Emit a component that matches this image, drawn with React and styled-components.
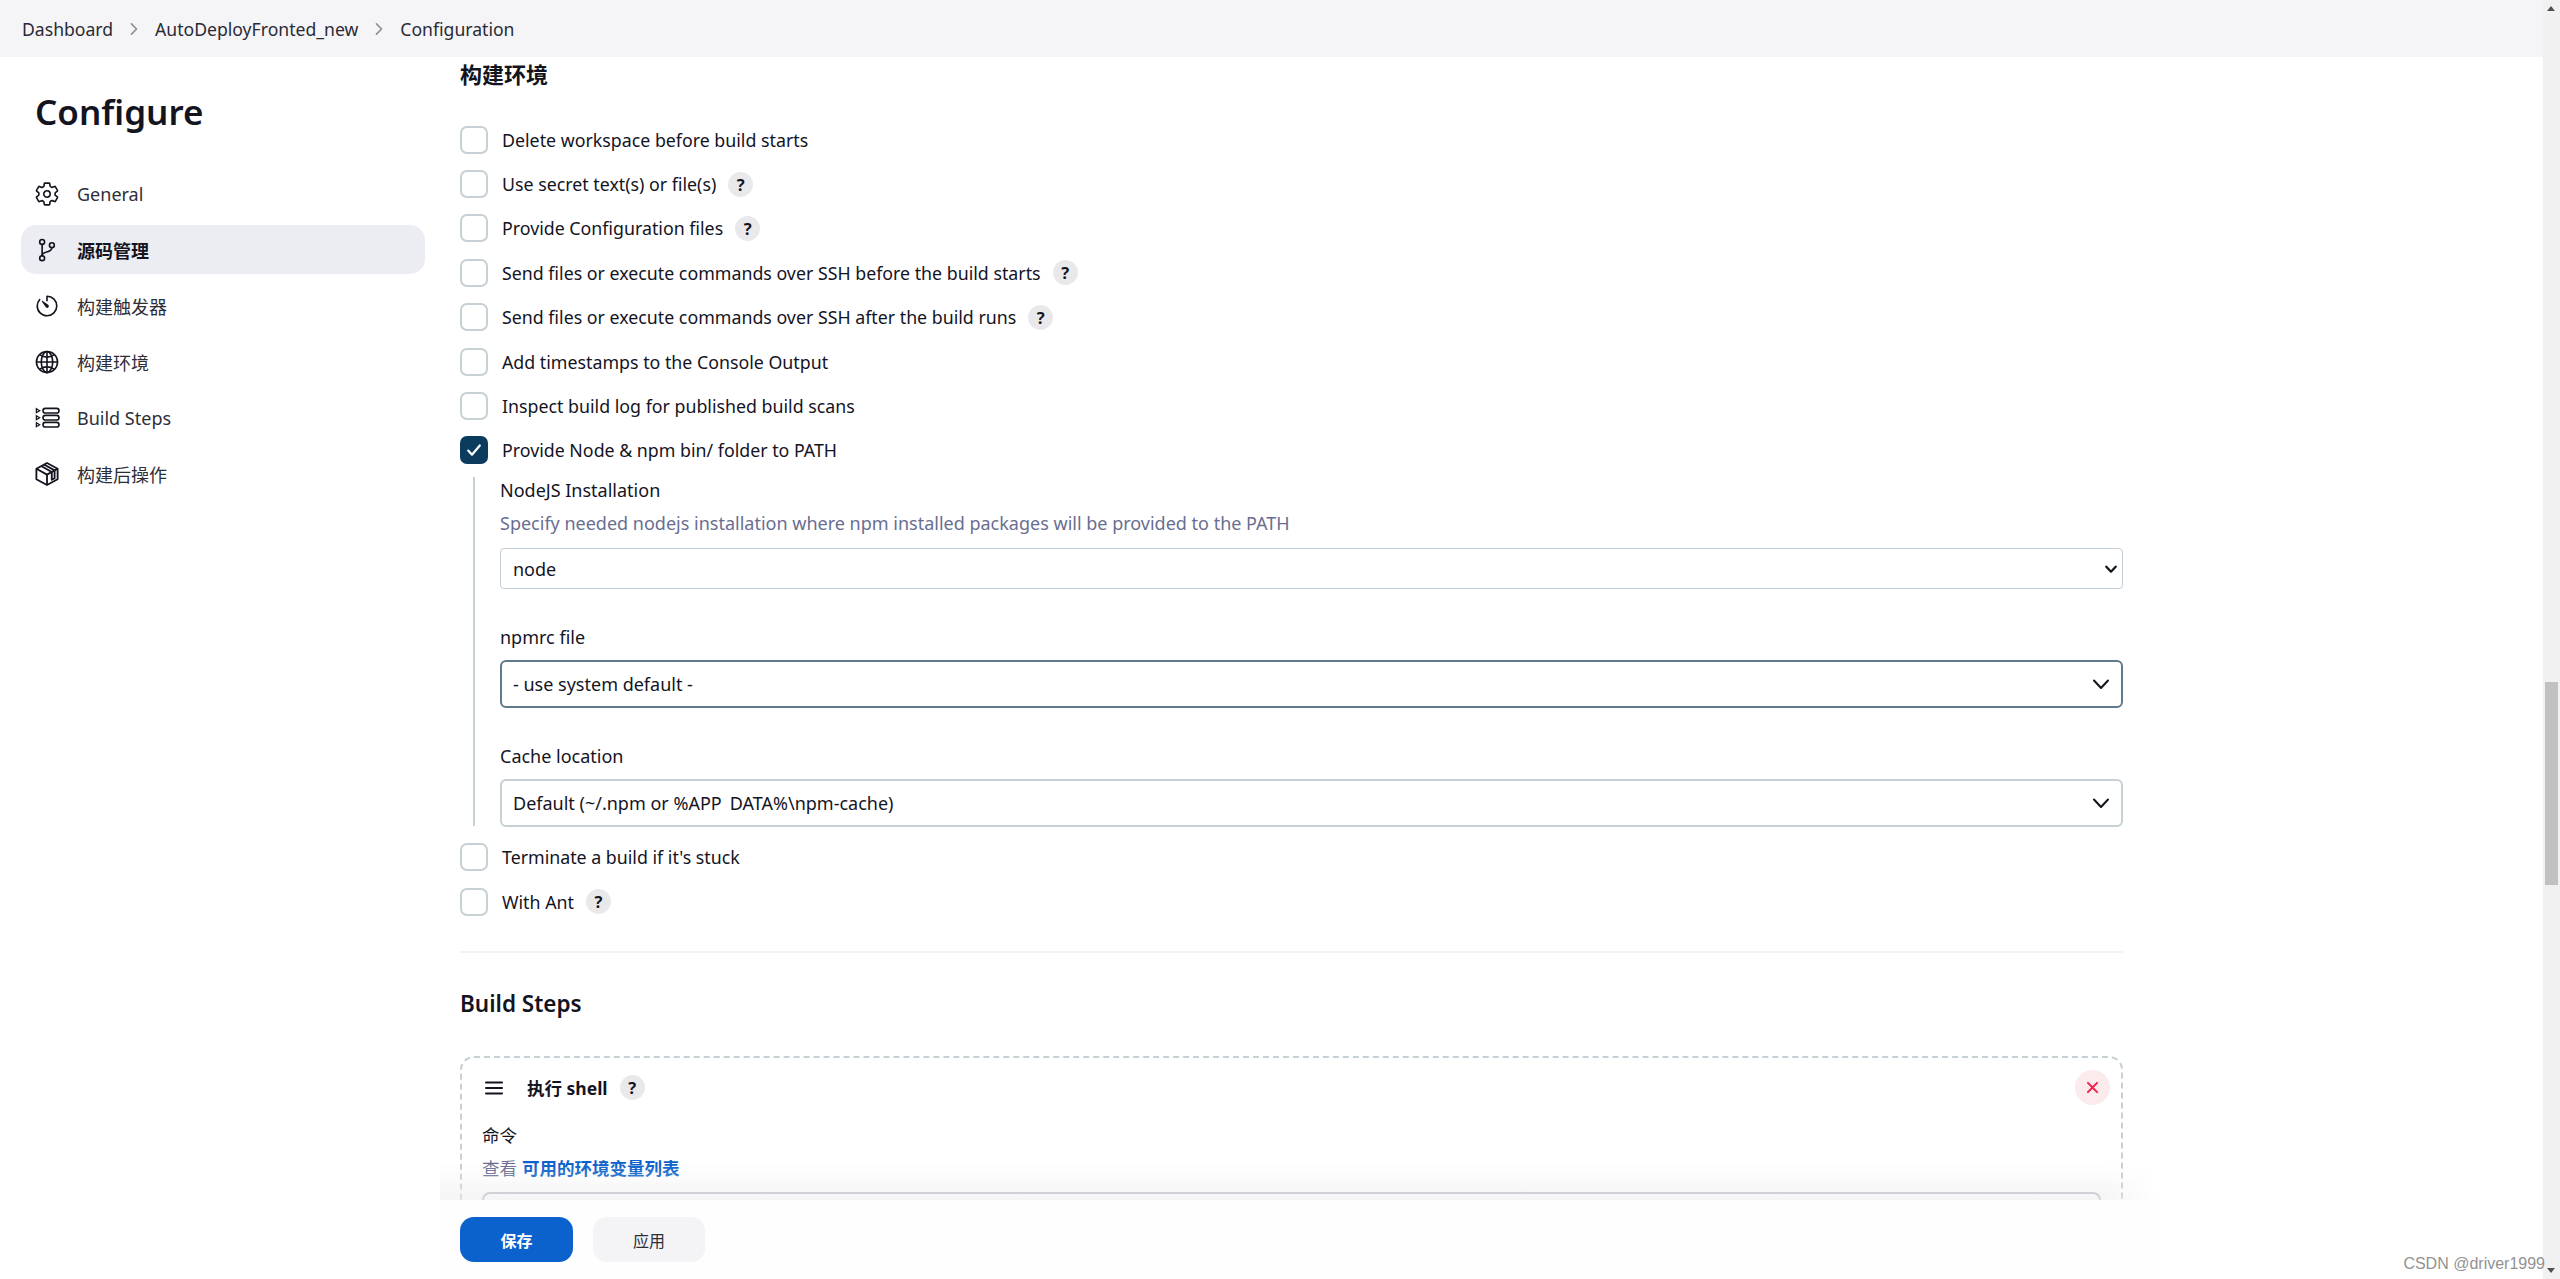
import React from 'react';
import styled, { createGlobalStyle } from 'styled-components';
import {
  IoSettingsOutline,
  IoGitBranchOutline,
  IoTimerOutline,
  IoGlobeOutline,
  IoChevronForward,
  IoClose,
} from 'react-icons/io5';

const GlobalStyle = createGlobalStyle`
  html, body {
    margin: 0;
    padding: 0;
    background: #fff;
    overflow: hidden;
  }
  * {
    box-sizing: border-box;
  }
  body {
    font-family: "Noto Sans", "Noto Sans CJK SC", sans-serif;
    font-size: 18px;
    color: #14141f;
  }
`;

const Root = styled.div`
  position: relative;
  display: flex;
  width: 2560px;
  height: 1279px;
  overflow: hidden;
`;
const Page = styled.div`
  flex: 1;
  display: flex;
  flex-direction: column;
  min-width: 0;
`;
const Breadcrumbs = styled.div`
  height: 57px;
  flex: none;
  display: flex;
  align-items: center;
  padding-left: 22px;
  background: #f5f5f7;
  font-size: 17.6px;
  color: #2a2a36;
`;
const CrumbSep = styled.span`
  display: flex;
  width: ${(p) => p.$w}px;
  justify-content: center;
  color: #8f8f99;
  font-size: 18px;
`;
const Body = styled.div`
  flex: 1;
  display: flex;
  min-height: 0;
`;
const Sidebar = styled.nav`
  width: 440px;
  flex: none;
  padding: 0 15px 0 21px;
`;
const Title = styled.h1`
  margin: 32px 0 34px 14px;
  font-size: 35px;
  line-height: 46px;
  font-weight: 600;
`;
const NavItem = styled.div`
  display: flex;
  align-items: center;
  height: 49px;
  margin-bottom: 7px;
  padding-left: 13px;
  gap: 17px;
  border-radius: 15px;
  background: ${(p) => (p.$active ? '#ecedf2' : 'transparent')};
  font-weight: ${(p) => (p.$active ? 700 : 400)};
  color: ${(p) => (p.$active ? '#14141f' : '#2e2e38')};
  svg {
    width: 26px;
    height: 26px;
    flex: none;
    color: #14141f;
  }
`;
const Main = styled.main`
  width: 1717px;
  flex: none;
  display: flex;
  flex-direction: column;
  min-height: 0;
`;
const Scroll = styled.div`
  flex: 1;
  min-height: 0;
  overflow: hidden;
  padding: 0 34px 0 20px;
`;
const SectionTitle = styled.h2`
  margin: ${(p) => p.$top || 0}px 0 0;
  font-size: ${(p) => p.$size || 22}px;
  line-height: 34px;
  font-weight: 600;
`;
const Options = styled.div`
  margin-top: ${(p) => p.$top}px;
`;
const OptionRow = styled.div`
  display: flex;
  align-items: center;
  height: 44.4px;
  font-size: 17.8px;
`;
const Box = styled.span`
  display: flex;
  align-items: center;
  justify-content: center;
  width: 28px;
  height: 28px;
  margin-right: 14px;
  flex: none;
  border-radius: 7px;
  border: 2px solid ${(p) => (p.$checked ? '#0b3c5d' : '#c6d0d5')};
  background: ${(p) => (p.$checked ? '#0b3c5d' : '#fff')};
  color: #fff;
  svg {
    width: 18px;
    height: 18px;
  }
`;
const Help = styled.span`
  display: flex;
  align-items: center;
  justify-content: center;
  width: 25px;
  height: 25px;
  margin-left: 12px;
  flex: none;
  border-radius: 50%;
  background: #e9e9ec;
  color: #14141f;
  font-size: 16.5px;
  font-weight: 700;
`;
const Nested = styled.div`
  margin: 4.5px 0 0 13px;
  padding-left: 25px;
  border-left: 2px solid #c6d0d5;
  height: 349px;
`;
const FieldLabel = styled.div`
  line-height: 26px;
  margin-top: ${(p) => p.$top || 0}px;
  font-size: ${(p) => p.$size || 18}px;
`;
const Description = styled.div`
  line-height: 26px;
  margin-top: 7px;
  color: #696e91;
`;
const Select = styled.div`
  display: flex;
  align-items: center;
  justify-content: space-between;
  height: ${(p) => (p.$native ? 41 : 48)}px;
  margin-top: ${(p) => (p.$native ? 12 : 10)}px;
  padding: 0 ${(p) => (p.$native ? 5 : 11)}px 0 ${(p) => (p.$native ? 12 : 11)}px;
  background: #fff;
  border-radius: ${(p) => (p.$native ? 4 : 6)}px;
  border: ${(p) => (p.$focus ? '2px solid #5f7a8a' : p.$native ? '1px solid #c3ced6' : '2px solid #c6d0d5')};
  svg {
    color: #14141f;
    width: ${(p) => (p.$native ? 12 : 18)}px;
    height: ${(p) => (p.$native ? 12 : 18)}px;
  }
`;
const ClippedChar = styled.span`
  color: transparent;
`;
const Divider = styled.hr`
  margin: 27.5px 0 0;
  border: 0;
  height: 2px;
  background: #f2f3f6;
`;
const StepCard = styled.div`
  margin-top: 35px;
  height: 300px;
  padding: 12px 20px 0;
  border: 2px dashed #c6d0d5;
  border-radius: 14px;
`;
const StepHead = styled.div`
  display: flex;
  align-items: center;
  height: 35px;
`;
const Handle = styled.span`
  display: flex;
  width: 45px;
  flex: none;
  svg {
    width: 24px;
    height: 24px;
    color: #14141f;
  }
`;
const StepName = styled.span`
  font-size: 17.5px;
  font-weight: 700;
`;
const DeleteButton = styled.span`
  display: flex;
  align-items: center;
  justify-content: center;
  width: 35px;
  height: 35px;
  margin: 0 -9px 0 auto;
  border-radius: 50%;
  background: #fcebed;
  color: #f0244c;
  font-size: 21px;
`;
const StepHelp = styled.div`
  line-height: 26px;
  margin-top: 7px;
  font-size: 17.5px;
  color: #696e91;
`;
const StepLink = styled.a`
  color: #0b62cc;
  font-weight: 700;
  margin-left: 5px;
`;
const TextArea = styled.div`
  height: 120px;
  margin-top: 11px;
  border: 2px solid #b6bdc3;
  border-radius: 8px;
`;
const SaveBar = styled.div`
  position: relative;
  flex: none;
  display: flex;
  gap: 20px;
  height: 79px;
  padding: 17px 0 0 20px;
  background: #fefefe;
  &::before {
    content: '';
    position: absolute;
    left: 0;
    right: 0;
    bottom: 100%;
    height: 36px;
    background: linear-gradient(to top, rgba(236, 236, 238, 0.55), rgba(255, 255, 255, 0));
    mask-image: linear-gradient(to right, #000 97%, transparent);
    pointer-events: none;
  }
`;
const Button = styled.button`
  width: ${(p) => (p.$primary ? 113 : 112)}px;
  height: 45px;
  border: 0;
  border-radius: 14px;
  background: ${(p) => (p.$primary ? '#0b62cc' : '#f4f4f7')};
  color: ${(p) => (p.$primary ? '#fff' : '#2e2e38')};
  font-family: inherit;
  font-size: 16px;
  font-weight: ${(p) => (p.$primary ? 700 : 400)};
`;
const Gutter = styled.div`
  flex: 1;
`;
const ScrollTrack = styled.div`
  position: relative;
  width: 17px;
  flex: none;
  background: #f1f1f1;
`;
const ScrollThumb = styled.div`
  position: absolute;
  top: 682px;
  left: 2px;
  width: 13px;
  height: 203px;
  background: #c1c1c1;
`;
const ScrollArrow = styled.div`
  position: absolute;
  left: 4px;
  ${(p) => (p.$down ? 'bottom: 6px;' : 'top: 6px;')}
  width: 0;
  height: 0;
  border-left: 4.5px solid transparent;
  border-right: 4.5px solid transparent;
  ${(p) => (p.$down ? 'border-top: 5px solid #505050;' : 'border-bottom: 5px solid #505050;')}
`;
const Watermark = styled.div`
  position: absolute;
  right: 15px;
  bottom: 6px;
  font-family: "Liberation Sans", sans-serif;
  font-size: 16px;
  color: #929292;
`;

const BuildStepsIcon = () => (
  <svg viewBox="0 0 26 26" fill="none" stroke="currentColor" strokeWidth="1.6">
    <rect x="9" y="3.4" width="16" height="4.6" rx="2.3" />
    <rect x="9" y="10.4" width="16" height="4.6" rx="2.3" />
    <rect x="9" y="17.4" width="16" height="4.6" rx="2.3" />
    <path d="M2.4 3.7l3.2 2-3.2 2zM2.4 10.7l3.2 2-3.2 2zM2.4 17.7l3.2 2-3.2 2z" strokeWidth="1.3" />
  </svg>
);

const PackageIcon = () => (
  <svg viewBox="0 0 24 24" fill="none" stroke="currentColor" strokeWidth="1.7" strokeLinejoin="round">
    <path d="M12 1.8l9.8 5.4v9.6L12 22.2l-9.8-5.4V7.2z" />
    <path d="M2.2 7.2L12 12.6l9.8-5.4M12 12.6v9.6" />
    <path d="M6.6 4.6l9.8 5.5v7.2l2.6-1.4V8.7L9.2 3.2" />
  </svg>
);

const HandleIcon = () => (
  <svg viewBox="0 0 24 24" fill="none" stroke="currentColor" strokeWidth="2" strokeLinecap="round">
    <path d="M4 6.5h16M4 12h16M4 17.5h16" />
  </svg>
);

const CheckIcon = () => (
  <svg viewBox="0 0 18 18" fill="none" stroke="currentColor" strokeWidth="2.2" strokeLinecap="round" strokeLinejoin="round">
    <path d="M3.2 9.6l3.8 4.1 7.8-9.2" />
  </svg>
);

const ChevronIcon = ({ weight }) => (
  <svg viewBox="0 0 18 18" fill="none" stroke="currentColor" strokeWidth={weight} strokeLinecap="round" strokeLinejoin="round">
    <path d="M2 5.5l7 7.5 7-7.5" />
  </svg>
);

const navItems = [
  { icon: <IoSettingsOutline />, label: 'General' },
  { icon: <IoGitBranchOutline />, label: '源码管理', active: true },
  { icon: <IoTimerOutline />, label: '构建触发器' },
  { icon: <IoGlobeOutline />, label: '构建环境' },
  { icon: <BuildStepsIcon />, label: 'Build Steps' },
  { icon: <PackageIcon />, label: '构建后操作' },
];

const Option = ({ checked, help, children }) => (
  <OptionRow>
    <Box $checked={checked}>{checked && <CheckIcon />}</Box>
    {children}
    {help && <Help>?</Help>}
  </OptionRow>
);

export default function App() {
  return (
    <Root>
      <GlobalStyle />
      <Page>
        <Breadcrumbs>
          <span>Dashboard</span>
          <CrumbSep $w={42}><IoChevronForward /></CrumbSep>
          <span>AutoDeployFronted_new</span>
          <CrumbSep $w={42}><IoChevronForward /></CrumbSep>
          <span>Configuration</span>
        </Breadcrumbs>
        <Body>
          <Sidebar>
            <Title>Configure</Title>
            {navItems.map((item) => (
              <NavItem key={item.label} $active={item.active}>
                {item.icon}
                {item.label}
              </NavItem>
            ))}
          </Sidebar>
          <Main>
            <Scroll>
              <SectionTitle>构建环境</SectionTitle>
              <Options $top={26.5}>
                <Option>Delete workspace before build starts</Option>
                <Option help>Use secret text(s) or file(s)</Option>
                <Option help>Provide Configuration files</Option>
                <Option help>Send files or execute commands over SSH before the build starts</Option>
                <Option help>Send files or execute commands over SSH after the build runs</Option>
                <Option>Add timestamps to the Console Output</Option>
                <Option>Inspect build log for published build scans</Option>
                <Option checked>Provide Node &amp; npm bin/ folder to PATH</Option>
              </Options>
              <Nested>
                <FieldLabel>NodeJS Installation</FieldLabel>
                <Description>Specify needed nodejs installation where npm installed packages will be provided to the PATH</Description>
                <Select $native>node<ChevronIcon weight={3.4} /></Select>
                <FieldLabel $top={35}>npmrc file</FieldLabel>
                <Select $focus>- use system default -<ChevronIcon weight={2} /></Select>
                <FieldLabel $top={35}>Cache location</FieldLabel>
                <Select><span>Default (~/.npm or %APP<ClippedChar>_</ClippedChar>DATA%\npm-cache)</span><ChevronIcon weight={2} /></Select>
              </Nested>
              <Options $top={9}>
                <Option>Terminate a build if it's stuck</Option>
                <Option help>With Ant</Option>
              </Options>
              <Divider />
              <SectionTitle $top={34} $size={22.5}>Build Steps</SectionTitle>
              <StepCard>
                <StepHead>
                  <Handle><HandleIcon /></Handle>
                  <StepName>执行 shell</StepName>
                  <Help>?</Help>
                  <DeleteButton><IoClose /></DeleteButton>
                </StepHead>
                <FieldLabel $top={17} $size={17.5}>命令</FieldLabel>
                <StepHelp>查看<StepLink>可用的环境变量列表</StepLink></StepHelp>
                <TextArea />
              </StepCard>
            </Scroll>
            <SaveBar>
              <Button $primary>保存</Button>
              <Button>应用</Button>
            </SaveBar>
          </Main>
          <Gutter />
        </Body>
      </Page>
      <ScrollTrack>
        <ScrollArrow />
        <ScrollThumb />
        <ScrollArrow $down />
      </ScrollTrack>
      <Watermark>CSDN @driver1999</Watermark>
    </Root>
  );
}
